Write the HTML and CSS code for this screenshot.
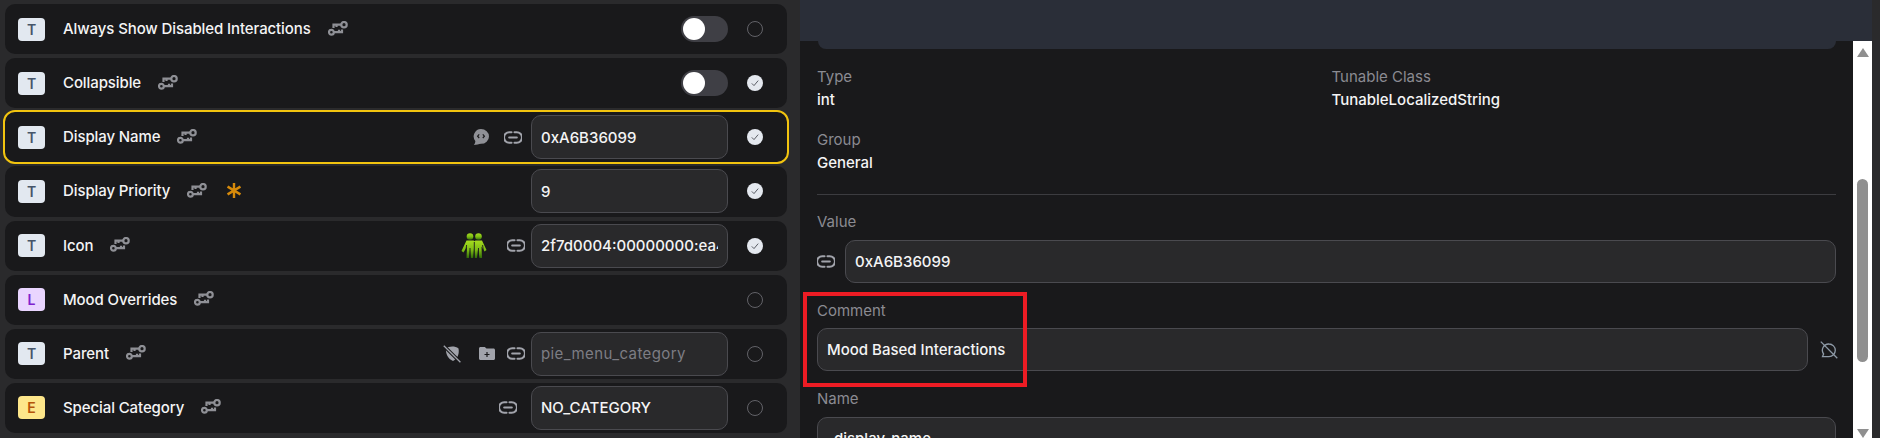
FILE: index.html
```html
<!DOCTYPE html>
<html lang="en">
<head>
<meta charset="utf-8">
<title>Tunables</title>
<link rel="stylesheet" href="styles.css">
</head>
<body>
<svg class="defs" width="0" height="0" aria-hidden="true">
  <defs>
    <symbol id="i-keys" viewBox="0 0 20 15">
      <g fill="none" stroke="currentColor" stroke-width="2.2">
        <circle cx="16" cy="3.7" r="2.7"/>
        <circle cx="3.4" cy="11.2" r="2.4"/>
        <path d="M13 3.7H5.5V7M8.5 3.7V6M5.8 11.2H14V8.4M11 11.2V8.8"/>
      </g>
    </symbol>
    <symbol id="i-link" viewBox="0 0 18 13">
      <g fill="none" stroke="currentColor" stroke-width="2.1" stroke-linecap="round">
        <path d="M7.5 1.3H5.2a5.2 5.2 0 0 0 0 10.4h2.3M10.5 1.3h2.3a5.2 5.2 0 0 1 0 10.4h-2.3M5.2 6.5h7.6"/>
      </g>
    </symbol>
    <symbol id="i-check" viewBox="0 0 16 16">
      <circle cx="8" cy="8" r="8" fill="#e4e8ef"/>
      <path d="M4.8 8.4l2.2 2.2 4.2-5" fill="none" stroke="#4a4d55" stroke-width=".9"/>
    </symbol>
    <symbol id="i-star" viewBox="0 0 14 15">
      <path d="M7 0v15M.6 3.600l12.800 7.800M13.400 3.600L.6 11.400" stroke="currentColor" stroke-width="2.400" fill="none"/>
    </symbol>
    <symbol id="i-bubble" viewBox="0 0 16 16">
      <path d="M8 0a8 7.4 0 0 1 0 14.8C6 15 3.5 16 .8 16c1-1 1.6-2.4 1.5-4A7.4 7.4 0 0 1 8 0z" fill="currentColor"/>
      <path d="M6.2 5.4L4.6 7.2l1.6 1.8M9.8 5.4l1.6 1.8-1.6 1.8" fill="none" stroke="#19191b" stroke-width="1.2"/>
    </symbol>
    <symbol id="i-shield-off" viewBox="0 0 18 18">
      <path d="M3 3.5C6 1 12 .8 15.5 3.5c1 5.500-1 10-5.500 12.500C5 14 2.500 9 3 3.500z" fill="currentColor"/>
      <path d="M.8 .8L17.400 17.200" stroke="#19191b" stroke-width="3.400"/>
      <path d="M.8 .8L17.400 17.200" stroke="currentColor" stroke-width="1.300"/>
    </symbol>
    <symbol id="i-folder" viewBox="0 0 16 13">
      <path d="M1.500 0h4.300l1.700 1.500h7c.8 0 1.500.7 1.500 1.500v8.500c0 .8-.7 1.500-1.500 1.500h-13C.7 13 0 12.300 0 11.500v-10C0 .7.700 0 1.500 0z" fill="currentColor"/>
      <path d="M8 5v5M5.500 7.500h5" stroke="#19191b" stroke-width="1.200"/>
    </symbol>
    <symbol id="i-comment-off" viewBox="0 0 18 18">
      <path d="M9 3a6.300 6.300 0 0 1 0 12.600H2.500L3.600 13A6.300 6.300 0 0 1 9 3z" fill="none" stroke="currentColor" stroke-width="1.300"/>
      <path d="M.8 .6L17.300 17.200" stroke="currentColor" stroke-width="1.300"/>
    </symbol>
    <linearGradient id="g-green" x1="0" y1="0" x2="0" y2="1">
      <stop offset="0" stop-color="#a6dc1e"/>
      <stop offset=".55" stop-color="#7cba14"/>
      <stop offset="1" stop-color="#2f6a08"/>
    </linearGradient>
  </defs>
</svg>

<main class="list">
  <div class="row">
    <span class="badge badge-t">T</span>
    <span class="name">Always Show Disabled Interactions</span>
    <svg class="ic-keys"><use href="#i-keys"/></svg>
    <div class="tail">
      <span class="toggle"><span class="knob"></span></span>
    </div>
    <span class="radio"></span>
  </div>
  <div class="row">
    <span class="badge badge-t">T</span>
    <span class="name">Collapsible</span>
    <svg class="ic-keys"><use href="#i-keys"/></svg>
    <div class="tail">
      <span class="toggle"><span class="knob"></span></span>
    </div>
    <svg class="check"><use href="#i-check"/></svg>
  </div>
  <div class="row row-active">
    <span class="badge badge-t">T</span>
    <span class="name">Display Name</span>
    <svg class="ic-keys"><use href="#i-keys"/></svg>
    <div class="tail">
      <svg class="ic-bubble"><use href="#i-bubble"/></svg>
      <svg class="ic-link ic-link-wide"><use href="#i-link"/></svg>
      <span class="field"><span class="field-text">0xA6B36099</span></span>
    </div>
    <svg class="check"><use href="#i-check"/></svg>
  </div>
  <div class="row">
    <span class="badge badge-t">T</span>
    <span class="name">Display Priority</span>
    <svg class="ic-keys"><use href="#i-keys"/></svg>
    <svg class="star"><use href="#i-star"/></svg>
    <div class="tail">
      <span class="field"><span class="field-text">9</span></span>
    </div>
    <svg class="check"><use href="#i-check"/></svg>
  </div>
  <div class="row">
    <span class="badge badge-t">T</span>
    <span class="name">Icon</span>
    <svg class="ic-keys"><use href="#i-keys"/></svg>
    <div class="tail">
      <svg class="ic-people" viewBox="0 0 26 26">
        <g fill="url(#g-green)">
          <circle cx="9" cy="3.500" r="3.300"/>
          <circle cx="17.500" cy="3.500" r="3.300"/>
          <path d="M5.500 7.500h7l1 .8 1-.8h6.500l4.500 9.500-2 1.500-3-5 .5 11.500h-2.500L17 16l-1 9h-2.500L13 15l-.800 10H9.800L9 16l-1 9H5.500L6 13.500l-3.500 6-2-1.500z"/>
        </g>
        <path d="M9 15v11M17.500 15v11M13.300 9v17M5.600 12l-1 8M21.600 12l1 8" stroke="#19191b" stroke-width=".9" fill="none"/>
      </svg>
      <svg class="ic-link"><use href="#i-link"/></svg>
      <span class="field"><span class="field-text">2f7d0004:00000000:ea4c1d2f</span></span>
    </div>
    <svg class="check"><use href="#i-check"/></svg>
  </div>
  <div class="row">
    <span class="badge badge-l">L</span>
    <span class="name">Mood Overrides</span>
    <svg class="ic-keys"><use href="#i-keys"/></svg>
    <div class="tail"></div>
    <span class="radio"></span>
  </div>
  <div class="row">
    <span class="badge badge-t">T</span>
    <span class="name">Parent</span>
    <svg class="ic-keys"><use href="#i-keys"/></svg>
    <div class="tail">
      <svg class="ic-shield"><use href="#i-shield-off"/></svg>
      <svg class="ic-folder"><use href="#i-folder"/></svg>
      <svg class="ic-link"><use href="#i-link"/></svg>
      <span class="field field-empty"><span class="field-text">pie_menu_category</span></span>
    </div>
    <span class="radio"></span>
  </div>
  <div class="row">
    <span class="badge badge-e">E</span>
    <span class="name">Special Category</span>
    <svg class="ic-keys"><use href="#i-keys"/></svg>
    <div class="tail">
      <svg class="ic-link ic-link-far"><use href="#i-link"/></svg>
      <span class="field"><span class="field-text">NO_CATEGORY</span></span>
    </div>
    <span class="radio"></span>
  </div>
</main>

<aside class="panel">
  <div class="band"></div>
  <div class="scroller">
    <div class="content">
      <div class="card-end"></div>
      <div class="meta">
        <div class="meta-item">
          <div class="label">Type</div>
          <div class="value">int</div>
        </div>
        <div class="meta-item">
          <div class="label">Tunable Class</div>
          <div class="value">TunableLocalizedString</div>
        </div>
        <div class="meta-item">
          <div class="label">Group</div>
          <div class="value">General</div>
        </div>
      </div>
      <div class="rule"></div>
      <div class="label label-value">Value</div>
      <div class="line">
        <svg class="ic-link"><use href="#i-link"/></svg>
        <span class="box">0xA6B36099</span>
      </div>
      <div class="label label-comment">Comment</div>
      <div class="line line-comment">
        <span class="box">Mood Based Interactions</span>
        <svg class="ic-comment"><use href="#i-comment-off"/></svg>
      </div>
      <div class="label label-name">Name</div>
      <div class="line">
        <span class="box">_display_name</span>
      </div>
      <div class="callout"></div>
    </div>
    <div class="scrollbar">
      <span class="arrow arrow-up"></span>
      <span class="track"><span class="thumb"></span></span>
      <span class="arrow arrow-down"></span>
    </div>
  </div>
</aside>
</body>
</html>
```
FILE: styles.css
```css
* { box-sizing: border-box; }

html, body {
  margin: 0;
  height: 438px;
  overflow: hidden;
}

body {
  display: flex;
  background: #2a2a2c;
  font-family: Inter, "Liberation Sans", sans-serif;
  color: #f4f4f5;
  padding-right: 8px;
}

.defs { position: absolute; }

.list {
  width: 800px;
  flex: none;
  padding: 4px 13px 0 5px;
  display: flex;
  flex-direction: column;
  gap: 4px;
}

.row {
  height: 50.14px;
  flex: none;
  display: flex;
  align-items: center;
  padding-left: 13px;
  background: #19191b;
  border-radius: 10px;
}

.row-active {
  outline: 2px solid #f2c40f;
  outline-offset: 0;
  box-shadow: 0 0 0 1px #19191b;
}

.badge {
  width: 27px;
  height: 23px;
  flex: none;
  display: flex;
  align-items: center;
  justify-content: center;
  border-radius: 4px;
  font-size: 14px;
  font-weight: 600;
  margin-right: 18px;
}

.badge-t { background: #e2e8f0; color: #475569; }
.badge-l { background: #e9d5ff; color: #7e22ce; }
.badge-e { background: #fde68a; color: #b45309; }

.name {
  font-size: 15px;
  font-weight: 500;
  letter-spacing: -0.1px;
  white-space: nowrap;
  margin-right: 17px;
  margin-top: -1px;
}

.ic-keys {
  width: 20px;
  height: 15px;
  flex: none;
  color: #8f9096;
  margin-top: -2px;
}

.star {
  width: 14px;
  height: 15px;
  flex: none;
  color: #d68a0b;
  margin-left: 20px;
  margin-top: -1px;
}

.tail {
  flex: 1;
  display: flex;
  align-items: center;
  justify-content: flex-end;
  min-width: 0;
}

.toggle {
  width: 47px;
  height: 26px;
  display: flex;
  align-items: center;
  padding-left: 2px;
  border-radius: 13px;
  background: #3f3f45;
}

.knob {
  width: 22px;
  height: 22px;
  border-radius: 50%;
  background: #fff;
}

.field {
  width: 196.500px;
  height: 44px;
  flex: none;
  display: flex;
  align-items: center;
  padding: 0 9px;
  font-size: 15px;
  font-weight: 500;
  color: #f4f4f5;
  white-space: nowrap;
  background: #29292b;
  border: 1px solid #4a4a4f;
  border-radius: 10px;
}

.field-text {
  flex: 1;
  min-width: 0;
  overflow: hidden;
}

.field-empty {
  color: #7d7d84;
  font-weight: 400;
  letter-spacing: 0.4px;
}

.ic-link {
  width: 18px;
  height: 13px;
  flex: none;
  color: #a1a3ab;
  margin-right: 6px;
}

.ic-link-wide { margin-right: 9px; }
.ic-link-far { margin-right: 14px; }

.ic-bubble {
  width: 16px;
  height: 16px;
  flex: none;
  color: #8f9096;
  margin-right: 15px;
}

.ic-people {
  width: 26px;
  height: 26px;
  flex: none;
  margin-right: 20px;
}

.ic-shield {
  width: 18px;
  height: 18px;
  flex: none;
  color: #a1a3ab;
  margin-right: 18px;
}

.ic-folder {
  width: 16px;
  height: 13px;
  flex: none;
  color: #a1a3ab;
  margin-right: 12px;
}

.check,
.radio {
  width: 16px;
  height: 16px;
  flex: none;
  margin-left: 19.500px;
  margin-right: 24px;
}

.radio {
  border: 1.500px solid #626268;
  border-radius: 50%;
}

.panel {
  flex: 1;
  min-width: 0;
  display: flex;
  flex-direction: column;
  background: #19191b;
  overflow: hidden;
}

.band {
  height: 41px;
  flex: none;
  background: #2a2e38;
}

.scroller {
  flex: 1;
  min-height: 0;
  display: flex;
}

.content {
  flex: 1;
  min-width: 0;
  position: relative;
  padding: 0 17px;
  overflow: hidden;
}

.card-end {
  height: 8px;
  margin: 0 0 0 1px;
  background: #2a2e38;
  border-radius: 0 0 10px 10px;
}

.meta {
  display: grid;
  grid-template-columns: 514.500px 1fr;
  row-gap: 20px;
  padding-top: 18px;
}

.label {
  font-size: 15px;
  line-height: 20px;
  color: #8b8b92;
}

.value {
  font-size: 15px;
  line-height: 20px;
  margin-top: 3px;
  color: #f4f4f5;
  font-weight: 500;
}

.rule {
  height: 1px;
  margin-top: 21px;
  background: #3c3c40;
}

.label-value { margin-top: 17px; }
.label-comment { margin-top: 18px; }
.label-name { margin-top: 18px; }

.line {
  display: flex;
  align-items: center;
  margin-top: 8px;
}

.line .ic-link { margin-right: 10px; }

.line-comment { margin-top: 7px; }

.box {
  flex: 1;
  min-width: 0;
  height: 43px;
  display: flex;
  align-items: center;
  padding: 0 9px;
  font-size: 15px;
  font-weight: 500;
  background: #29292b;
  border: 1px solid #4a4a4f;
  border-radius: 10px;
}

.ic-comment {
  width: 18px;
  height: 18px;
  flex: none;
  color: #8f9ba8;
  margin-left: 12px;
  margin-right: -2px;
}

.callout {
  position: absolute;
  left: 3px;
  top: 251px;
  width: 224px;
  height: 95px;
  border: 4.500px solid #ed1c24;
  pointer-events: none;
}

.scrollbar {
  width: 19px;
  flex: none;
  display: flex;
  flex-direction: column;
  align-items: center;
  background: #fff;
}

.track {
  flex: 1;
  display: block;
  width: 11px;
  padding-top: 122px;
}

.thumb {
  display: block;
  height: 183px;
  border-radius: 6px;
  background: #8f8f8f;
}

.arrow {
  width: 0;
  height: 0;
  border-left: 6.500px solid transparent;
  border-right: 6.500px solid transparent;
}

.arrow-up {
  margin-top: 7px;
  border-bottom: 9px solid #8f8f8f;
}

.arrow-down {
  margin-bottom: 0;
  border-top: 9px solid #8f8f8f;
}
```
